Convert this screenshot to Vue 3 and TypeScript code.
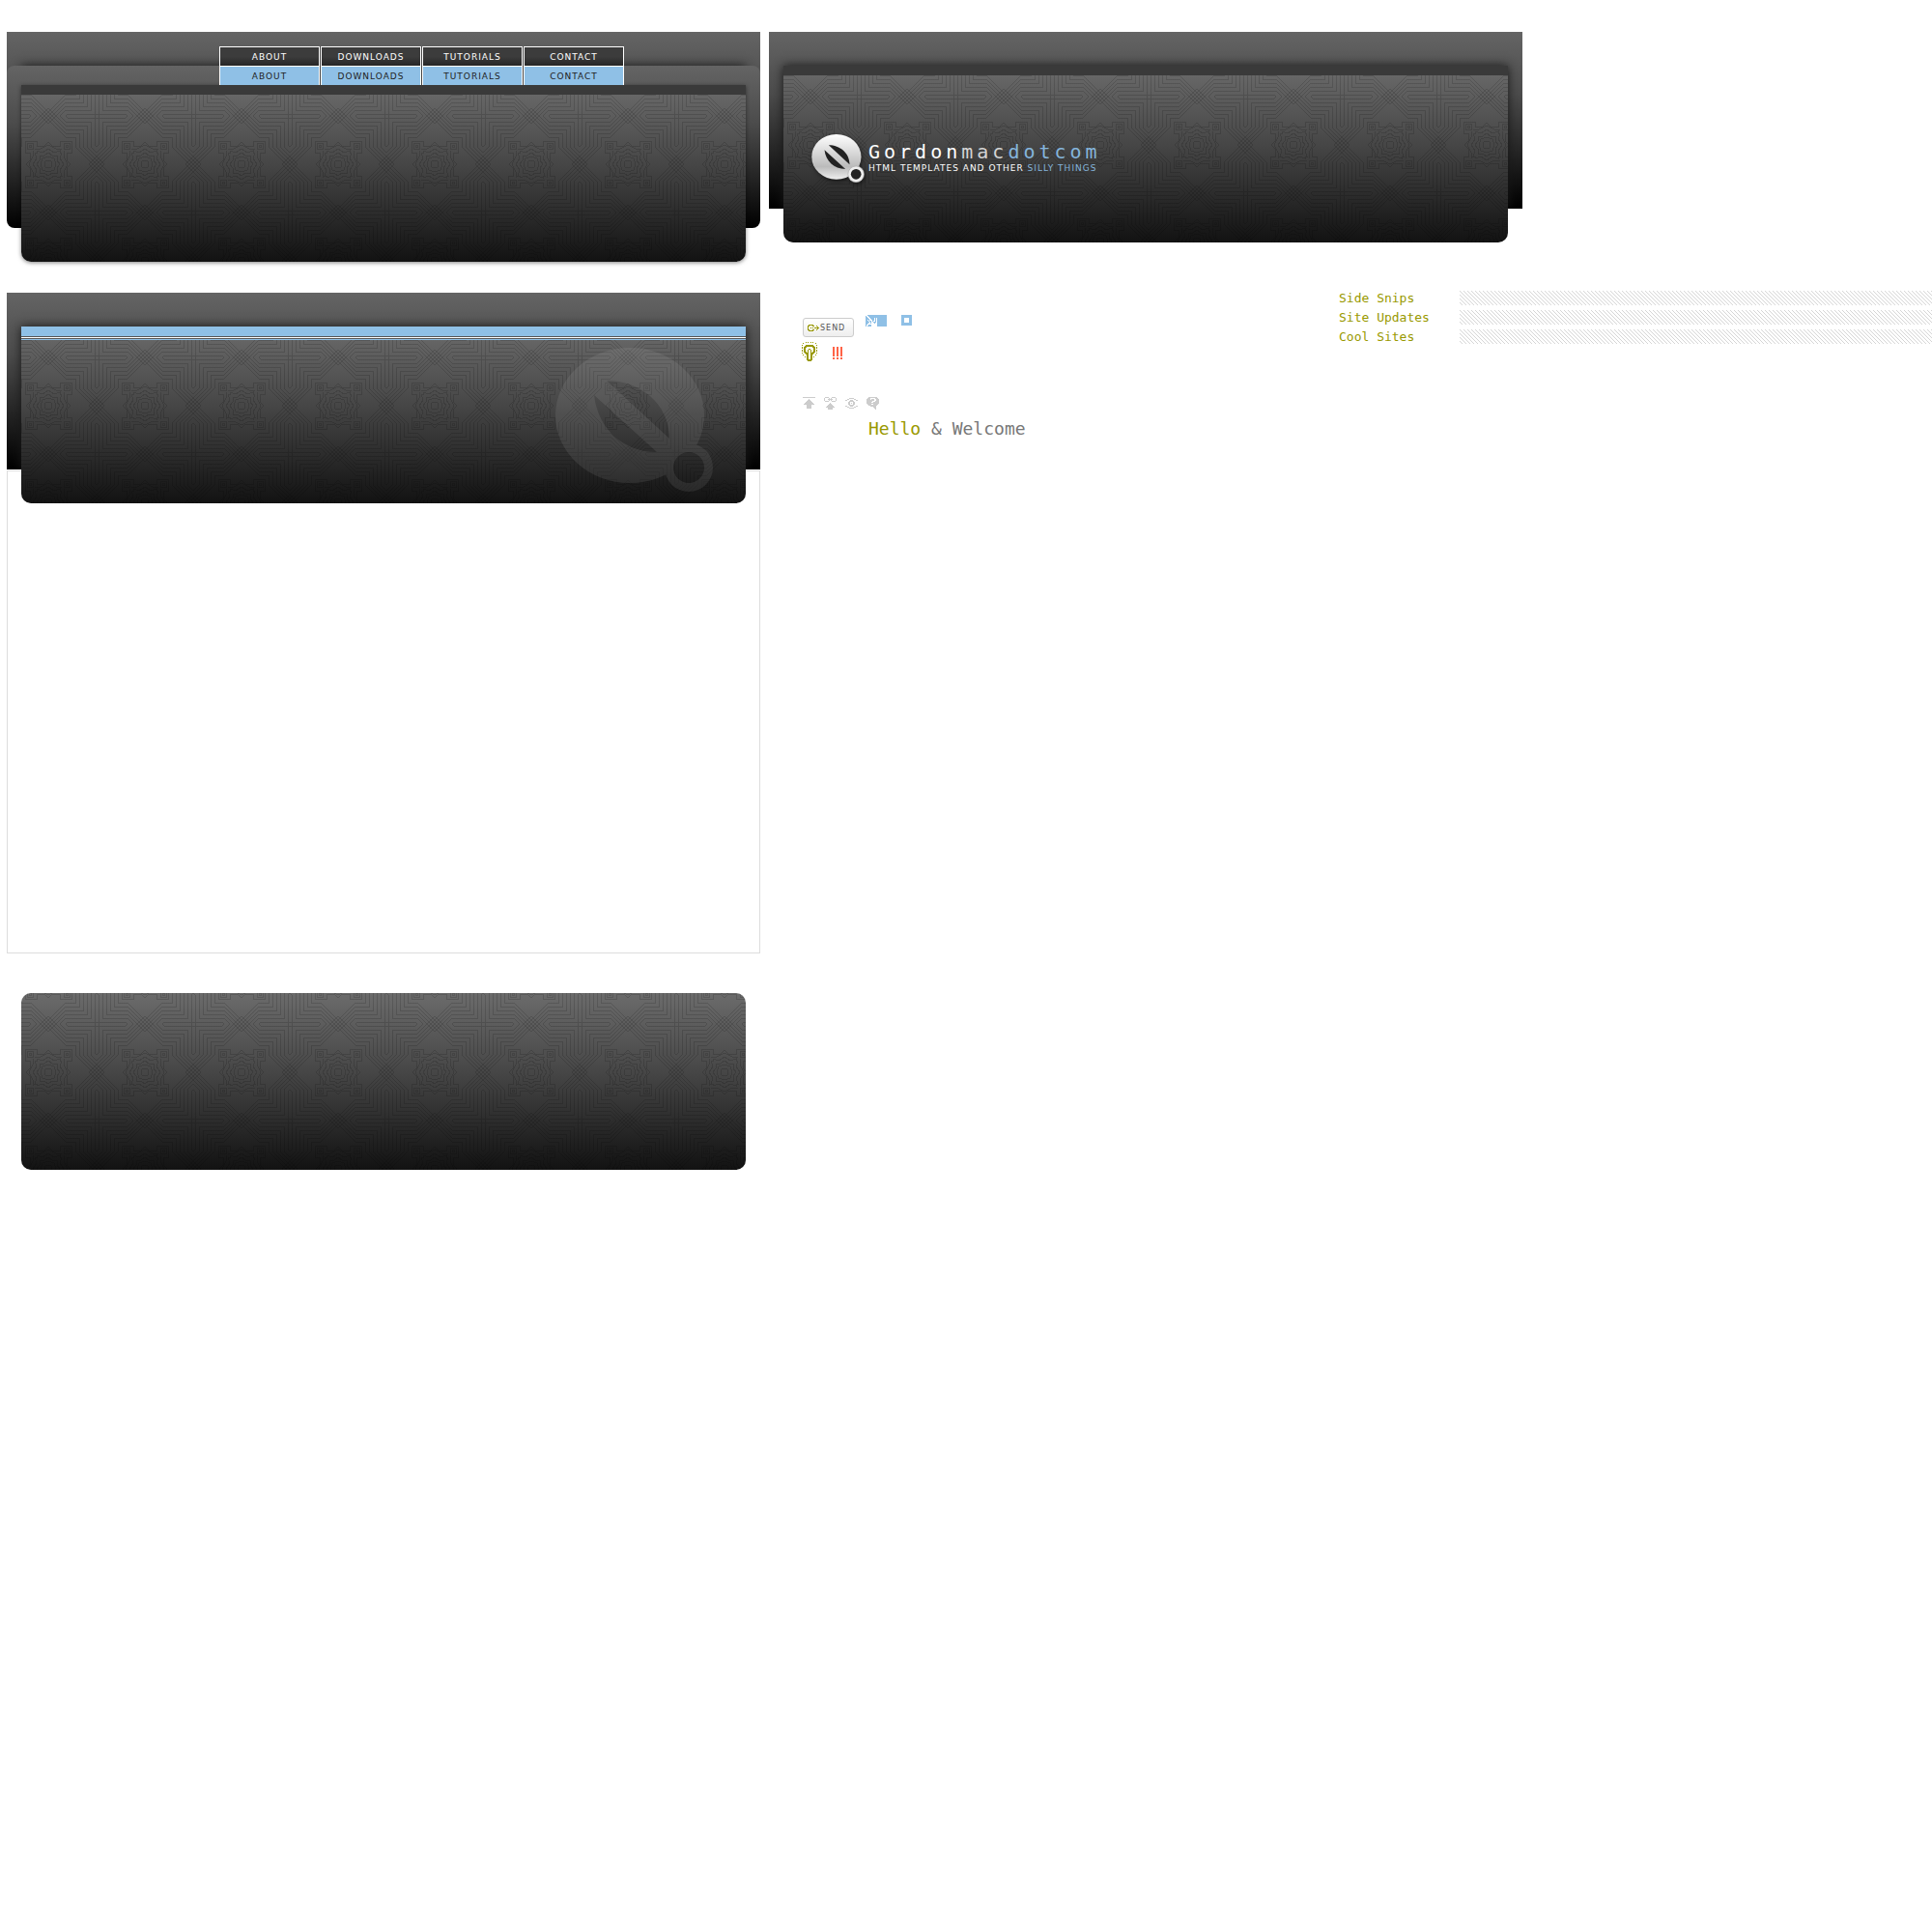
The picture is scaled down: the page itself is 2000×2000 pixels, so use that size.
<script setup lang="ts">
interface Glyph {
  path: string
  width: number
  height: number
}

/** Turns rows of '#' cells into one path of unit squares. */
function bitmap(rows: string[]): Glyph {
  let path = ''
  rows.forEach((row, y) => {
    for (const run of row.matchAll(/#+/g)) {
      path += `M${run.index} ${y}h${run[0].length}v1h-${run[0].length}z`
    }
  })
  return { path, width: rows[0].length, height: rows.length }
}

const mail = bitmap([
  '..####################...',
  '#..###################...',
  '##..##################...',
  '###..####.#.##########...',
  '####..###.#.##########...',
  '##.#...##.#.##########...',
  '###.##.#..#.##########...',
  '####.#..###.##########...',
  '###..#...#..##########...',
  '##..........##########...',
  '#..###......##########...',
  '#.####......##########...'
])

const send = bitmap([
  '.#####......',
  '##...##..#..',
  '#.........#.',
  '#..#.#.#####',
  '#.........#.',
  '##...##..#..',
  '.#####......'
])

const bulb = bitmap([
  '....#.#..#.#....',
  '.#............#.',
  '................',
  '#...########...#',
  '...##########...',
  '#.###......###.#',
  '#.##........##.#',
  '..##...##...##..',
  '#.##..#..#..##.#',
  '#.##..#..#..##.#',
  '..###.#..#.###..',
  '#..####..####..#',
  '....###..###....',
  '.#...##..##...#.',
  '.....##..##.....',
  '...#.##..##.#...',
  '.....##..##.....',
  '.....##..##.....',
  '.....######.....',
  '......####......'
])

const alert = bitmap([
  ...Array<string>(10).fill('##..##..##'),
  '..........',
  '##..##..##',
  '##..##..##'
])

const tools: { name: string; glyph: Glyph }[] = [
  {
    name: 'Back to top',
    glyph: bitmap([
      '#############',
      '.............',
      '......#......',
      '.....###.....',
      '....#####....',
      '...#######...',
      '..#########..',
      '.###########.',
      '....#####....',
      '....#####....',
      '....#####....',
      '....#####....',
      '.............'
    ])
  },
  {
    name: 'Permalink',
    glyph: bitmap([
      '.####...####.',
      '#....#.#....#',
      '#...#####...#',
      '#....#.#....#',
      '.####...####.',
      '.............',
      '......#......',
      '.....###.....',
      '....#####....',
      '...#######...',
      '..#########..',
      '....#####....',
      '....#####....'
    ])
  },
  {
    name: 'View',
    glyph: bitmap([
      '.............',
      '....#####....',
      '..##.....##..',
      '##...###...##',
      '....#####....',
      '...##...##...',
      '...##.#.##...',
      '...##...##...',
      '....#####....',
      '##...###...##',
      '..##.....##..',
      '....#####....',
      '.............'
    ])
  },
  {
    name: 'Comment',
    glyph: bitmap([
      '..#########..',
      '.###.....###.',
      '####.###..###',
      '########..###',
      '######...####',
      '#####..######',
      '#############',
      '.####..#####.',
      '..#########..',
      '....######...',
      '.......###...',
      '........##...',
      '.........#...'
    ])
  }
]

/** One quadrant of the fretwork tile: cross at the origin, rosette at 50,50. */
function fretwork(): string {
  let d = 'M0 2H30L32 0M2 0V30L0 32'
  for (let k = 6; k <= 22; k += 4) {
    const turn = 32
    const end = turn + k
    if (end <= 50) {
      d += `M0 ${end}L${k} ${turn}V${k}H${turn}L${end} 0`
    } else {
      const rest = k - (50 - turn)
      d += `M${rest} 50L${k} ${turn}V${k}H${turn}L50 ${rest}`
    }
  }
  for (let r = 4; r <= 8; r += 4) d += `M${50 - r} 0L50 ${r}M0 ${50 - r}L${r} 50`
  d += 'M28 28h6v6h-6zM30 30h2v2h-2z'
  d += 'M50 46L47 47L46 50M50 42L44 44L42 50'
  d += 'M50 38L46 41L41 41L41 46L38 50'
  d += 'M50 34L44 38L38 36V38L36 38L38 44L34 50'
  d += 'M50 30L42 34H36M34 36V42L30 50'
  d += 'M50 27L46 31H38V26H26V38H31V46L27 50'
  return d
}

const fret = fretwork()
const quadrants = ['', 'scale(-1 1)', 'scale(1 -1)', 'scale(-1 -1)']

const menu = ['About', 'Downloads', 'Tutorials', 'Contact']
const sections = ['Side Snips', 'Site Updates', 'Cool Sites']
</script>

<template>
  <svg class="defs" aria-hidden="true">
    <defs>
      <pattern id="fret" width="100" height="100" patternUnits="userSpaceOnUse" x="28" y="-18">
        <g transform="translate(50 50)" fill="none" stroke="#000" stroke-opacity="0.15" shape-rendering="crispEdges">
          <path v-for="q in quadrants" :key="q" :d="fret" :transform="q" />
        </g>
      </pattern>
      <pattern id="hatch" width="4" height="4" patternUnits="userSpaceOnUse">
        <path d="M0 0h1v1h-1zM1 1h1v1h-1zM2 2h1v1h-1zM3 3h1v1h-1z" fill="#d6d6d6" shape-rendering="crispEdges" />
      </pattern>
      <linearGradient id="silver" x1="0" y1="0" x2="0" y2="1">
        <stop offset="0" stop-color="#fff" />
        <stop offset="0.72" stop-color="#bbb" />
        <stop offset="1" stop-color="#eee" />
      </linearGradient>
      <mask id="cutout">
        <rect width="164" height="150" fill="#fff" />
        <path d="M53 34C88 34 118 58 118 94ZM40 49C44 84 70 108 105 108Z" fill="#000" />
        <circle cx="138" cy="124" r="16" fill="#000" />
      </mask>
    </defs>
  </svg>

  <main class="page">
    <div class="left">
      <header class="frame first">
        <div class="shell">
          <div class="panel">
            <svg class="weave" aria-hidden="true"><rect width="100%" height="100%" fill="url(#fret)" /></svg>
            <div class="strip"></div>
          </div>
        </div>
        <nav class="menu">
          <a v-for="item in menu" :key="item" href="#">{{ item }}</a>
          <a v-for="item in menu" :key="item + '-over'" class="over" href="#">{{ item }}</a>
        </nav>
      </header>

      <section class="sheet">
        <div class="frame">
          <div class="panel">
            <svg class="weave" aria-hidden="true"><rect width="100%" height="100%" fill="url(#fret)" /></svg>
            <div class="strip blue"></div>
            <div class="rules"></div>
            <svg class="watermark" viewBox="0 0 164 150" aria-hidden="true">
              <g mask="url(#cutout)" fill="#fff">
                <ellipse cx="77" cy="70" rx="77" ry="70" />
                <circle cx="138" cy="124" r="25" />
              </g>
            </svg>
          </div>
        </div>
      </section>

      <footer class="panel foot">
        <svg class="weave" aria-hidden="true"><rect width="100%" height="100%" fill="url(#fret)" /></svg>
      </footer>
    </div>

    <div class="right">
      <header class="frame">
        <div class="panel">
          <svg class="weave" aria-hidden="true"><rect width="100%" height="100%" fill="url(#fret)" /></svg>
          <div class="strip"></div>
          <div class="brand">
            <svg class="mark" viewBox="0 0 164 150" aria-hidden="true">
              <path d="M53 34C88 34 118 58 118 94ZM40 49C44 84 70 108 105 108Z" fill="#222" />
              <circle cx="138" cy="124" r="17" fill="#222" />
              <g mask="url(#cutout)">
                <ellipse cx="77" cy="70" rx="77" ry="70" fill="url(#silver)" />
                <circle cx="138" cy="124" r="25" fill="#eee" stroke="#aaa" stroke-width="2" />
              </g>
            </svg>
            <div class="words">
              <h1>Gordon<span class="soft">mac</span><span class="sky">dotcom</span></h1>
              <p>HTML templates and other <span class="sky">silly things</span></p>
            </div>
          </div>
        </div>
      </header>

      <div class="parts">
        <div class="kit">
          <div class="row top">
            <button class="send" type="button">
              <svg :width="send.width" :height="send.height" aria-hidden="true">
                <path :d="send.path" fill="#990" shape-rendering="crispEdges" />
              </svg>
              Send
            </button>
            <svg :width="mail.width" :height="mail.height" role="img" aria-label="Mail">
              <path :d="mail.path" fill="#8fc0e6" shape-rendering="crispEdges" />
            </svg>
            <span class="bullet"></span>
          </div>
          <div class="row notes">
            <svg :width="bulb.width" :height="bulb.height" role="img" aria-label="Tip">
              <path :d="bulb.path" fill="#990" shape-rendering="crispEdges" />
            </svg>
            <svg class="alert" :width="alert.width" :height="alert.height" role="img" aria-label="Warning">
              <path :d="alert.path" fill="tomato" shape-rendering="crispEdges" />
            </svg>
          </div>
          <div class="row tools">
            <svg
              v-for="tool in tools"
              :key="tool.name"
              :width="tool.glyph.width"
              :height="tool.glyph.height"
              role="img"
              :aria-label="tool.name"
            >
              <path :d="tool.glyph.path" fill="#ccc" shape-rendering="crispEdges" />
            </svg>
          </div>
          <h2><span class="olive">Hello</span> &amp; Welcome</h2>
        </div>

        <div class="list">
          <div v-for="title in sections" :key="title" class="entry">
            <h3>{{ title }}</h3>
            <svg class="hatch" aria-hidden="true"><rect width="100%" height="100%" fill="url(#hatch)" /></svg>
          </div>
        </div>
      </div>
    </div>
  </main>
</template>

<style>
body {
  margin: 0;
  background: #fff;
}
</style>

<style scoped>
h1,
h2,
h3,
p {
  margin: 0;
  font-weight: normal;
}

svg {
  display: block;
  flex: none;
}

.defs {
  position: absolute;
  width: 0;
  height: 0;
}

.page {
  display: flex;
  gap: 9px;
  padding: 33px 0 0 7px;
  font-family: "DejaVu Sans Mono", "Liberation Mono", monospace;
}

.left {
  flex: 0 1 780px;
  min-width: 0;
}

.right {
  flex: 1;
  min-width: 0;
}

.frame {
  position: relative;
  box-sizing: border-box;
  max-width: 780px;
  height: 183px;
  padding: 35px 15px 0;
  background: linear-gradient(#646464, #4c4c4c 35%, #000);
}

/* shadow of the panel, kept inside the dark frame */
.frame::before {
  content: "";
  position: absolute;
  inset: 35px 15px 0;
  box-shadow: 0 0 10px #181818;
  clip-path: inset(-35px -15px 0);
}

.first {
  padding: 35px 0 0;
}

.shell {
  position: relative;
  box-sizing: border-box;
  height: 168px;
  padding: 20px 15px 0;
  border-radius: 8px;
  background: linear-gradient(#646464, #4c4c4c 35%, #000);
}

.shell .panel {
  box-shadow: 0 1px 4px rgba(0, 0, 0, 0.5);
}

.panel {
  position: relative;
  height: 183px;
  overflow: hidden;
  border-radius: 0 0 10px 10px;
  background: linear-gradient(#6b6b6b, #464646 45%, #121212);
}

.weave {
  position: absolute;
  inset: 0;
  width: 100%;
  height: 100%;
}

.strip {
  position: relative;
  height: 10px;
  background: #3a3a3a;
}

.strip.blue {
  background: #8fc0e6;
}

.rules {
  position: relative;
  height: 4px;
  background: linear-gradient(#555 1px, #fff 1px 2px, #555 2px 3px, #8fc0e6 3px);
}

.watermark {
  position: absolute;
  top: 22px;
  right: 33px;
  width: 164px;
  height: 150px;
  opacity: 0.08;
}

.menu {
  position: absolute;
  top: 15px;
  left: 220px;
  display: grid;
  grid-template-columns: repeat(4, 104px);
  column-gap: 1px;
  background: #444;
}

.menu a {
  box-sizing: border-box;
  height: 20px;
  border: solid #fff;
  border-width: 1px 1px 0;
  background: linear-gradient(#3c3c3c 50%, #262626);
  color: #fff;
  text-decoration: none;
  text-align: center;
  text-transform: uppercase;
  font: 9px/20px "DejaVu Sans", sans-serif;
  letter-spacing: 1px;
}

.menu a.over {
  background: #8fc0e6;
  color: #222;
}

.sheet {
  box-sizing: border-box;
  height: 684px;
  margin-top: 87px;
  background:
    linear-gradient(#ddd, #ddd) left 0 top 184px / 1px 500px no-repeat,
    linear-gradient(#ddd, #ddd) right 0 top 184px / 1px 500px no-repeat,
    linear-gradient(#ddd, #ddd) left 0 top 184px / 100% 1px no-repeat,
    linear-gradient(#ddd, #ddd) left 0 bottom 0 / 100% 1px no-repeat;
}

.foot {
  margin: 41px 15px 0;
  border-radius: 10px;
}

.brand {
  position: relative;
  display: flex;
  gap: 4px;
  padding: 61px 0 0 29px;
}

.mark {
  width: 55px;
  height: 50px;
  filter: drop-shadow(1px 2px 2px rgba(0, 0, 0, 0.5));
}

.words {
  padding-top: 8px;
  color: #fff;
}

.words h1 {
  font-size: 20px;
  line-height: 20px;
  letter-spacing: 4px;
}

.words p {
  font: 9px/14px "DejaVu Sans", sans-serif;
  text-transform: uppercase;
  letter-spacing: 1px;
}

.soft {
  color: #d4d4d4;
}

.sky {
  color: #85b5dc;
}

.parts {
  display: flex;
  margin-top: 85px;
}

.kit {
  flex: 0 0 590px;
  box-sizing: border-box;
  padding: 25px 0 0 34px;
}

.row {
  display: flex;
  align-items: flex-start;
}

.top {
  gap: 12px;
  height: 28px;
  padding-left: 1px;
}

.send {
  display: flex;
  align-items: center;
  gap: 1px;
  box-sizing: border-box;
  width: 53px;
  height: 20px;
  margin-top: 3px;
  padding: 1px 0 0 4px;
  border: 1px solid #ccc;
  border-radius: 3px;
  background: linear-gradient(#fff, #eee);
  color: #555;
  font: 8px/18px "DejaVu Sans", sans-serif;
  text-transform: uppercase;
  letter-spacing: 1px;
}

.bullet {
  box-sizing: border-box;
  width: 11px;
  height: 11px;
  border: 3px solid #8fc0e6;
}

.notes {
  gap: 16px;
  height: 57px;
}

.alert {
  margin-top: 5px;
}

.tools {
  gap: 9px;
  padding-left: 1px;
}

.kit h2 {
  margin-top: 8px;
  padding-left: 69px;
  color: #777;
  font-size: 18px;
  line-height: 24px;
}

.olive {
  color: #990;
}

.list {
  flex: 1;
  display: grid;
  gap: 5px;
  align-content: start;
}

.entry {
  display: flex;
}

.entry h3 {
  flex: 0 0 125px;
  color: #990;
  font-size: 13px;
  line-height: 15px;
}

.hatch {
  flex: 1;
  width: 0;
  height: 15px;
}
</style>
